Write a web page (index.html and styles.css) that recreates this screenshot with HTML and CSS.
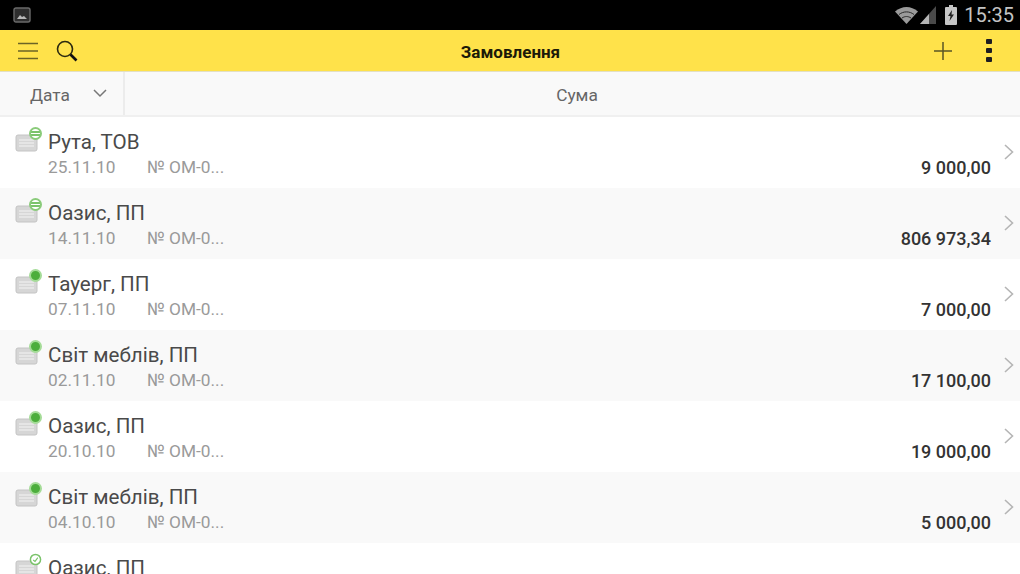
FILE: index.html
```html
<!DOCTYPE html>
<html lang="uk">

<head>
    <meta charset="UTF-8">
    <meta name="viewport" content="width=device-width, initial-scale=1.0">
    <title>Замовлення</title>
    <link rel="stylesheet" href="styles.css">
</head>

<body>
    <svg class="defs" width="0" height="0">
        <symbol id="doc" viewBox="0 0 26 24">
            <rect x="1" y="7" width="21" height="16" rx="2" fill="#d6d6d6" stroke="#c4c4c4"/>
            <path d="M4 12h15M4 15h15M4 18h15" stroke="#f4f4f4" stroke-width="1.2"/>
        </symbol>
        <symbol id="chev" viewBox="0 0 12 18">
            <path d="M2 2l7.5 7-7.5 7" fill="none" stroke="#b5b5b5" stroke-width="1.6"/>
        </symbol>
    </svg>

    <!-- Status bar -->
    <div class="status-bar">
        <svg class="status-pic" width="18" height="16" viewBox="0 0 18 16">
            <rect x="1" y="1" width="16" height="14" rx="2" fill="#2e2e2e" stroke="#6a6a6a" stroke-width="1.4"/>
            <path d="M4 12l3-4 2 2 2-1 3 3z" fill="#b8b8b8"/>
        </svg>
        <div class="status-right">
            <svg width="25" height="20" viewBox="0 0 25 20">
                <path d="M1 6.5C8 .5 17 .5 24 6.5L12.500 19z" fill="#9a9a9a"/>
                <path d="M5 9.500c4.500-3.500 10.500-3.500 15 0" fill="none" stroke="#2a2a2a" stroke-width="1"/>
                <path d="M8 13c3-2 6-2 9 0" fill="none" stroke="#2a2a2a" stroke-width="1"/>
            </svg>
            <svg width="18" height="20" viewBox="0 0 18 20">
                <path d="M17 1v18H1z" fill="#4a4a4a"/>
                <path d="M10 9v10H1zM6 19v-6" fill="#b5b5b5"/>
            </svg>
            <svg class="status-batt" width="12" height="20" viewBox="0 0 12 20">
                <path d="M4 0h4v2h3a1 1 0 0 1 1 1v16a1 1 0 0 1-1 1H1a1 1 0 0 1-1-1V3a1 1 0 0 1 1-1h3z" fill="#c6c6c6"/>
                <path d="M7 5L3 11h2.500L4.500 16 9 9.500H6.500z" fill="#222"/>
            </svg>
            <span class="status-time">15:35</span>
        </div>
    </div>

    <!-- Toolbar -->
    <header class="toolbar">
        <div class="toolbar-left">
            <svg width="20" height="18" viewBox="0 0 20 18">
                <path d="M0 1.500h20M0 9h20M0 16.500h20" stroke="#6b6426" stroke-width="1.500"/>
            </svg>
            <svg width="22" height="22" viewBox="0 0 22 22">
                <circle cx="9" cy="9" r="7.500" fill="none" stroke="#2c2a10" stroke-width="1.600"/>
                <path d="M14.500 14.500l6 6" stroke="#111" stroke-width="2.600"/>
            </svg>
        </div>
        <h1>Замовлення</h1>
        <div class="toolbar-right">
            <svg width="18" height="18" viewBox="0 0 18 18">
                <path d="M9 0v18M0 9h18" stroke="#5a5526" stroke-width="1.500"/>
            </svg>
            <div class="dots"><i></i><i></i><i></i></div>
        </div>
    </header>

    <!-- Column heads -->
    <div class="columns">
        <div class="col-date">
            <span>Дата</span>
            <svg width="14" height="9" viewBox="0 0 14 9">
                <path d="M1 1l6 6 6-6" fill="none" stroke="#777" stroke-width="1.500"/>
            </svg>
        </div>
        <div class="col-sum">Сума</div>
    </div>

    <!-- Orders -->
    <div class="list">
        <div class="row">
            <div class="row-icon">
                <svg class="doc"><use href="#doc"/></svg>
                <span class="badge badge-open"></span>
            </div>
            <div class="row-main">
                <div class="row-title">Рута, ТОВ</div>
                <div class="row-sub"><span class="row-date">25.11.10</span><span>№ ОМ-0...</span></div>
            </div>
            <div class="row-sum">9 000,00</div>
            <svg class="chev"><use href="#chev"/></svg>
        </div>
        <div class="row">
            <div class="row-icon">
                <svg class="doc"><use href="#doc"/></svg>
                <span class="badge badge-open"></span>
            </div>
            <div class="row-main">
                <div class="row-title">Оазис, ПП</div>
                <div class="row-sub"><span class="row-date">14.11.10</span><span>№ ОМ-0...</span></div>
            </div>
            <div class="row-sum">806 973,34</div>
            <svg class="chev"><use href="#chev"/></svg>
        </div>
        <div class="row">
            <div class="row-icon">
                <svg class="doc"><use href="#doc"/></svg>
                <span class="badge badge-full"></span>
            </div>
            <div class="row-main">
                <div class="row-title">Тауерг, ПП</div>
                <div class="row-sub"><span class="row-date">07.11.10</span><span>№ ОМ-0...</span></div>
            </div>
            <div class="row-sum">7 000,00</div>
            <svg class="chev"><use href="#chev"/></svg>
        </div>
        <div class="row">
            <div class="row-icon">
                <svg class="doc"><use href="#doc"/></svg>
                <span class="badge badge-full"></span>
            </div>
            <div class="row-main">
                <div class="row-title">Світ меблів, ПП</div>
                <div class="row-sub"><span class="row-date">02.11.10</span><span>№ ОМ-0...</span></div>
            </div>
            <div class="row-sum">17 100,00</div>
            <svg class="chev"><use href="#chev"/></svg>
        </div>
        <div class="row">
            <div class="row-icon">
                <svg class="doc"><use href="#doc"/></svg>
                <span class="badge badge-full"></span>
            </div>
            <div class="row-main">
                <div class="row-title">Оазис, ПП</div>
                <div class="row-sub"><span class="row-date">20.10.10</span><span>№ ОМ-0...</span></div>
            </div>
            <div class="row-sum">19 000,00</div>
            <svg class="chev"><use href="#chev"/></svg>
        </div>
        <div class="row">
            <div class="row-icon">
                <svg class="doc"><use href="#doc"/></svg>
                <span class="badge badge-full"></span>
            </div>
            <div class="row-main">
                <div class="row-title">Світ меблів, ПП</div>
                <div class="row-sub"><span class="row-date">04.10.10</span><span>№ ОМ-0...</span></div>
            </div>
            <div class="row-sum">5 000,00</div>
            <svg class="chev"><use href="#chev"/></svg>
        </div>
        <div class="row">
            <div class="row-icon">
                <svg class="doc"><use href="#doc"/></svg>
                <svg class="badge-check" viewBox="0 0 14 14">
                    <circle cx="7" cy="7" r="5.500" fill="#fff" stroke="#7ac36a" stroke-width="1.600"/>
                    <path d="M4.500 7.500l2 1.500 3-4" fill="none" stroke="#7ac36a" stroke-width="1.200"/>
                </svg>
            </div>
            <div class="row-main">
                <div class="row-title">Оазис, ПП</div>
            </div>
        </div>
    </div>
</body>

</html>
```

FILE: styles.css
```css
html,
body {
    height: 574px;
    overflow: hidden;
}

body {
    font-family: Roboto, "Noto Sans", sans-serif;
    margin: 0;
    padding: 0;
    background-color: white;
    color: #333;
}

.defs {
    display: block;
    height: 0;
}

.status-bar {
    height: 30px;
    background-color: black;
    display: flex;
    align-items: center;
    justify-content: space-between;
    padding: 0 6px 0 13px;
    box-sizing: border-box;
}

.status-right {
    display: flex;
    align-items: center;
    gap: 0;
}

.status-batt {
    margin: 0 7px 0 8px;
}

.status-time {
    color: #c4c4c4;
    font-size: 20px;
}

.toolbar {
    height: 41px;
    background-color: #ffe24a;
    display: flex;
    align-items: center;
    border-bottom: 1px solid #e3e0c4;
}

.toolbar-left {
    display: flex;
    align-items: center;
    gap: 18px;
    margin-left: 18px;
}

.toolbar h1 {
    flex: 1;
    margin: 2px 0 0;
    padding-left: 9px;
    font-size: 17px;
    font-weight: bold;
    text-align: center;
    color: #1c1a08;
}

.toolbar-right {
    display: flex;
    align-items: center;
    gap: 34px;
    margin-right: 28px;
}

.dots {
    display: flex;
    flex-direction: column;
    gap: 4px;
}

.dots i {
    display: block;
    width: 6px;
    height: 5px;
    background-color: #1d1c22;
    border-radius: 1px;
}

.columns {
    height: 43px;
    display: flex;
    background-color: #f9f9f9;
    border-bottom: 2px solid #f0f0f0;
    font-size: 17.300px;
    color: #666;
}

.col-date {
    width: 125px;
    box-sizing: border-box;
    display: flex;
    align-items: center;
    gap: 23px;
    padding-left: 30px;
    border-right: 2px solid #ececec;
}

.col-date span {
    margin-top: 2px;
}

.col-sum {
    flex: 1;
    display: flex;
    align-items: center;
    justify-content: center;
    padding: 2px 0 0 9px;
}

.row {
    height: 71px;
    box-sizing: border-box;
    display: flex;
    position: relative;
    padding-left: 15px;
}

.row:nth-child(even) {
    background-color: #f9f9f9;
}

.row-icon {
    width: 33px;
    position: relative;
}

.doc {
    position: absolute;
    left: 0;
    top: 11px;
    width: 26px;
    height: 24px;
}

.badge,
.badge-check {
    position: absolute;
    left: 14px;
    top: 10px;
    width: 13px;
    height: 13px;
    box-sizing: border-box;
    border-radius: 50%;
}

.badge-open {
    background: linear-gradient(#fff 2px, #7ac36a 2px, #7ac36a 4px, #fff 4px, #fff 5px, #7ac36a 5px, #7ac36a 7px, #fff 7px);
    border: 2px solid #8acb7a;
}

.badge-full {
    background-color: #4cae3c;
    border: 2px solid #a5dc98;
}

.row-main {
    flex: 1;
    padding-top: 13px;
}

.row-title {
    font-size: 20.600px;
    line-height: 24px;
    color: #4a4a4a;
}

.row-sub {
    display: flex;
    font-size: 17.300px;
    line-height: 20px;
    margin-top: 3px;
    color: #9a9a9a;
}

.row-date {
    width: 99px;
}

.row-sum {
    align-self: flex-end;
    margin: 0 29px 10px 0;
    font-size: 18px;
    line-height: 20px;
    font-weight: 500;
    color: #333;
}

.chev {
    position: absolute;
    right: 5px;
    top: 26px;
    width: 12px;
    height: 18px;
}
```
